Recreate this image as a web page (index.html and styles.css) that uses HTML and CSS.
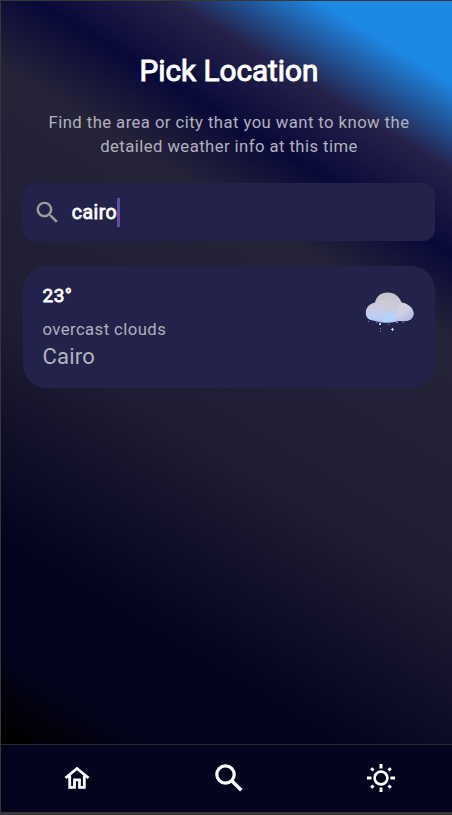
FILE: index.html
```html
<!DOCTYPE html>
<html lang="en">
<head>
<meta charset="utf-8">
<title>Pick Location</title>
<link rel="stylesheet" href="styles.css">
</head>
<body>
<div class="app">
  <main class="screen">
    <h1 class="title">Pick Location</h1>
    <p class="subtitle">Find the area or city that you want to know the<br>detailed weather info at this time</p>
    <div class="search">
      <svg class="search-icon" viewBox="0 0 24 24"><path d="M15.5 14h-.79l-.28-.27C15.41 12.59 16 11.11 16 9.5 16 5.91 13.09 3 9.5 3S3 5.91 3 9.5 5.91 16 9.5 16c1.61 0 3.09-.59 4.23-1.57l.27.28v.79l5 4.99L20.49 19l-4.99-5zm-6 0C7.01 14 5 11.99 5 9.5S7.01 5 9.5 5 14 7.01 14 9.5 11.99 14 9.5 14z"/></svg>
      <span class="query">cairo</span><span class="caret"></span>
    </div>
    <section class="card">
      <div class="info">
        <div class="temp">23°</div>
        <div class="condition">overcast clouds</div>
        <div class="city">Cairo</div>
      </div>
      <svg class="cloud" viewBox="0 0 50 42">
        <defs>
          <linearGradient id="body" x1="0" y1="0" x2="0" y2="1"><stop offset="0" stop-color="#c6c4c9"/><stop offset=".5" stop-color="#cccbdb"/><stop offset=".8" stop-color="#bfcdf3"/><stop offset="1" stop-color="#a9bdf0"/></linearGradient>
          <radialGradient id="glow" gradientUnits="userSpaceOnUse" cx="25" cy="28" r="11"><stop offset="0" stop-color="#a6d8ff"/><stop offset="1" stop-color="#b9d5fb" stop-opacity="0"/></radialGradient>
          <linearGradient id="puff" x1="0" y1="0" x2=".6" y2="1"><stop offset="0" stop-color="#d4d2da"/><stop offset=".6" stop-color="#cfcde0"/><stop offset="1" stop-color="#b4bae6"/></linearGradient>
        </defs>
        <path fill="url(#body)" d="M9 29.500C4.500 29 1.500 26 1.800 21.500 2 16 6 12.500 11 11.500 12.500 5 17 1.500 23.500 1.500c7 0 12 4 14 10 6 1 12 5.500 12 11 0 5-4 7.500-9.500 7.800-3 .1-4-.7-6 0C29 32 18 32 15 31z"/>
        <path fill="url(#puff)" d="M37 11.500c6.500 1 12.500 5.500 12.500 11 0 5-4 7.500-9.500 7.500-4 0-7-2.500-7-7 0-4.500 2-9 4-11.500z"/>
        <ellipse fill="url(#glow)" cx="25" cy="26" rx="11" ry="5.500"/>
        <g fill="#e6e5ed"><circle cx="18" cy="11" r=".7"/><circle cx="24" cy="7" r=".6"/><circle cx="29" cy="12" r=".6"/><circle cx="10" cy="19" r=".6"/><circle cx="16" cy="14" r=".6"/></g>
        <g fill="#c5d0ee"><path d="M14 27h2v2h-2zM15 32h2v2h-2zM27 38h1v-1h1v1h1v1h-1v1h-1v-1h-1z"/><path opacity=".6" d="M4 30h1v1H4zM12 31h1v1h-1zM16 37h1v1h-1zM24 33h1v1h-1zM32 31h2v1h-2zM39 31h1v1h-1zM16 40h1v1h-1z"/></g>
      </svg>
    </section>
  </main>
  <nav class="nav">
    <div class="tab"><svg class="home" viewBox="0 0 26 24"><path fill="none" stroke="#fff" stroke-width="2.800" d="M1.500 12 13 2.500 24.500 12M5.700 9.500v11.800h4.800v-7.500h5v7.500h4.800V9.500"/></svg></div>
    <div class="tab"><svg class="find" viewBox="0 0 28 28"><circle cx="10.500" cy="10.500" r="8.700" fill="none" stroke="#fff" stroke-width="3.200"/><path d="m17 17 9.300 9.300" stroke="#fff" stroke-width="3.500"/></svg></div>
    <div class="tab"><svg class="sun" viewBox="0 0 28 28" fill="none" stroke="#fff"><circle cx="14" cy="14" r="6.400" stroke-width="2.600"/><path stroke-width="3" d="M14 0v4.500M14 23.500V28M0 14h4.500M23.500 14H28M4.200 4.200l2.300 2.300M21.500 21.500l2.300 2.300M4.200 23.800l2.300-2.300M21.500 6.500l2.300-2.300"/></svg></div>
  </nav>
</div>
</body>
</html>
```
FILE: styles.css
```css
* { box-sizing: border-box; }
body { margin: 0; background: #373737; font-family: Roboto, sans-serif; color: #fff; }
.app { height: 815px; padding: 1px 0 3px 1px; display: flex; flex-direction: column; }
.screen {
  flex: 1;
  padding: 51px 17px 0 22px;
  background: linear-gradient(31.26deg, #000 0%, #000 1%, #04041e 9.500%, #05041f 21%, #1f1d33 42%, #211f35 50%, #252338 66.7%, #090939 75%, #25214a 83.3%, #1e88e5 92%);
}
.title { margin: 0; height: 38px; font-size: 29.700px; line-height: 38px; font-weight: 400; text-align: center; -webkit-text-stroke: 1px #fff; }
.subtitle { margin: 21px 0 0; font-size: 16.700px; line-height: 24px; letter-spacing: .43px; text-align: center; color: #b2b1bd; white-space: nowrap; }
.search { margin-top: 24px; height: 58px; border-radius: 12px; background: #23224a; display: flex; align-items: center; }
.search-icon { width: 29px; height: 29px; margin-left: 9.500px; fill: #9d9b9e; }
.query { margin-left: 10.300px; font-size: 19.500px; letter-spacing: .45px; -webkit-text-stroke: .8px #fff; }
.caret { width: 2.500px; height: 29px; background: #674ea5; }
.card { margin-top: 25px; height: 122px; padding: 18px 21px 0 19.500px; border-radius: 24px; background: #23224a; display: flex; justify-content: space-between; }
.temp { font-size: 19px; line-height: 24px; letter-spacing: .45px; -webkit-text-stroke: .8px #fff; }
.condition { margin-top: 11px; font-size: 16.700px; line-height: 22px; letter-spacing: .43px; color: #b0afbd; }
.city { margin-top: 1px; font-size: 22px; line-height: 30px; letter-spacing: .2px; color: #b5b4c0; }
.cloud { width: 50px; height: 42px; margin-top: 7px; }
.nav { height: 68px; padding-bottom: 1px; border-top: 1px solid #282734; background: #04041e; display: grid; grid-template-columns: repeat(3, 152px); overflow: hidden; }
.tab { display: flex; align-items: center; justify-content: center; }
.home { width: 26px; height: 24px; }
.find, .sun { width: 28px; height: 28px; }
```
